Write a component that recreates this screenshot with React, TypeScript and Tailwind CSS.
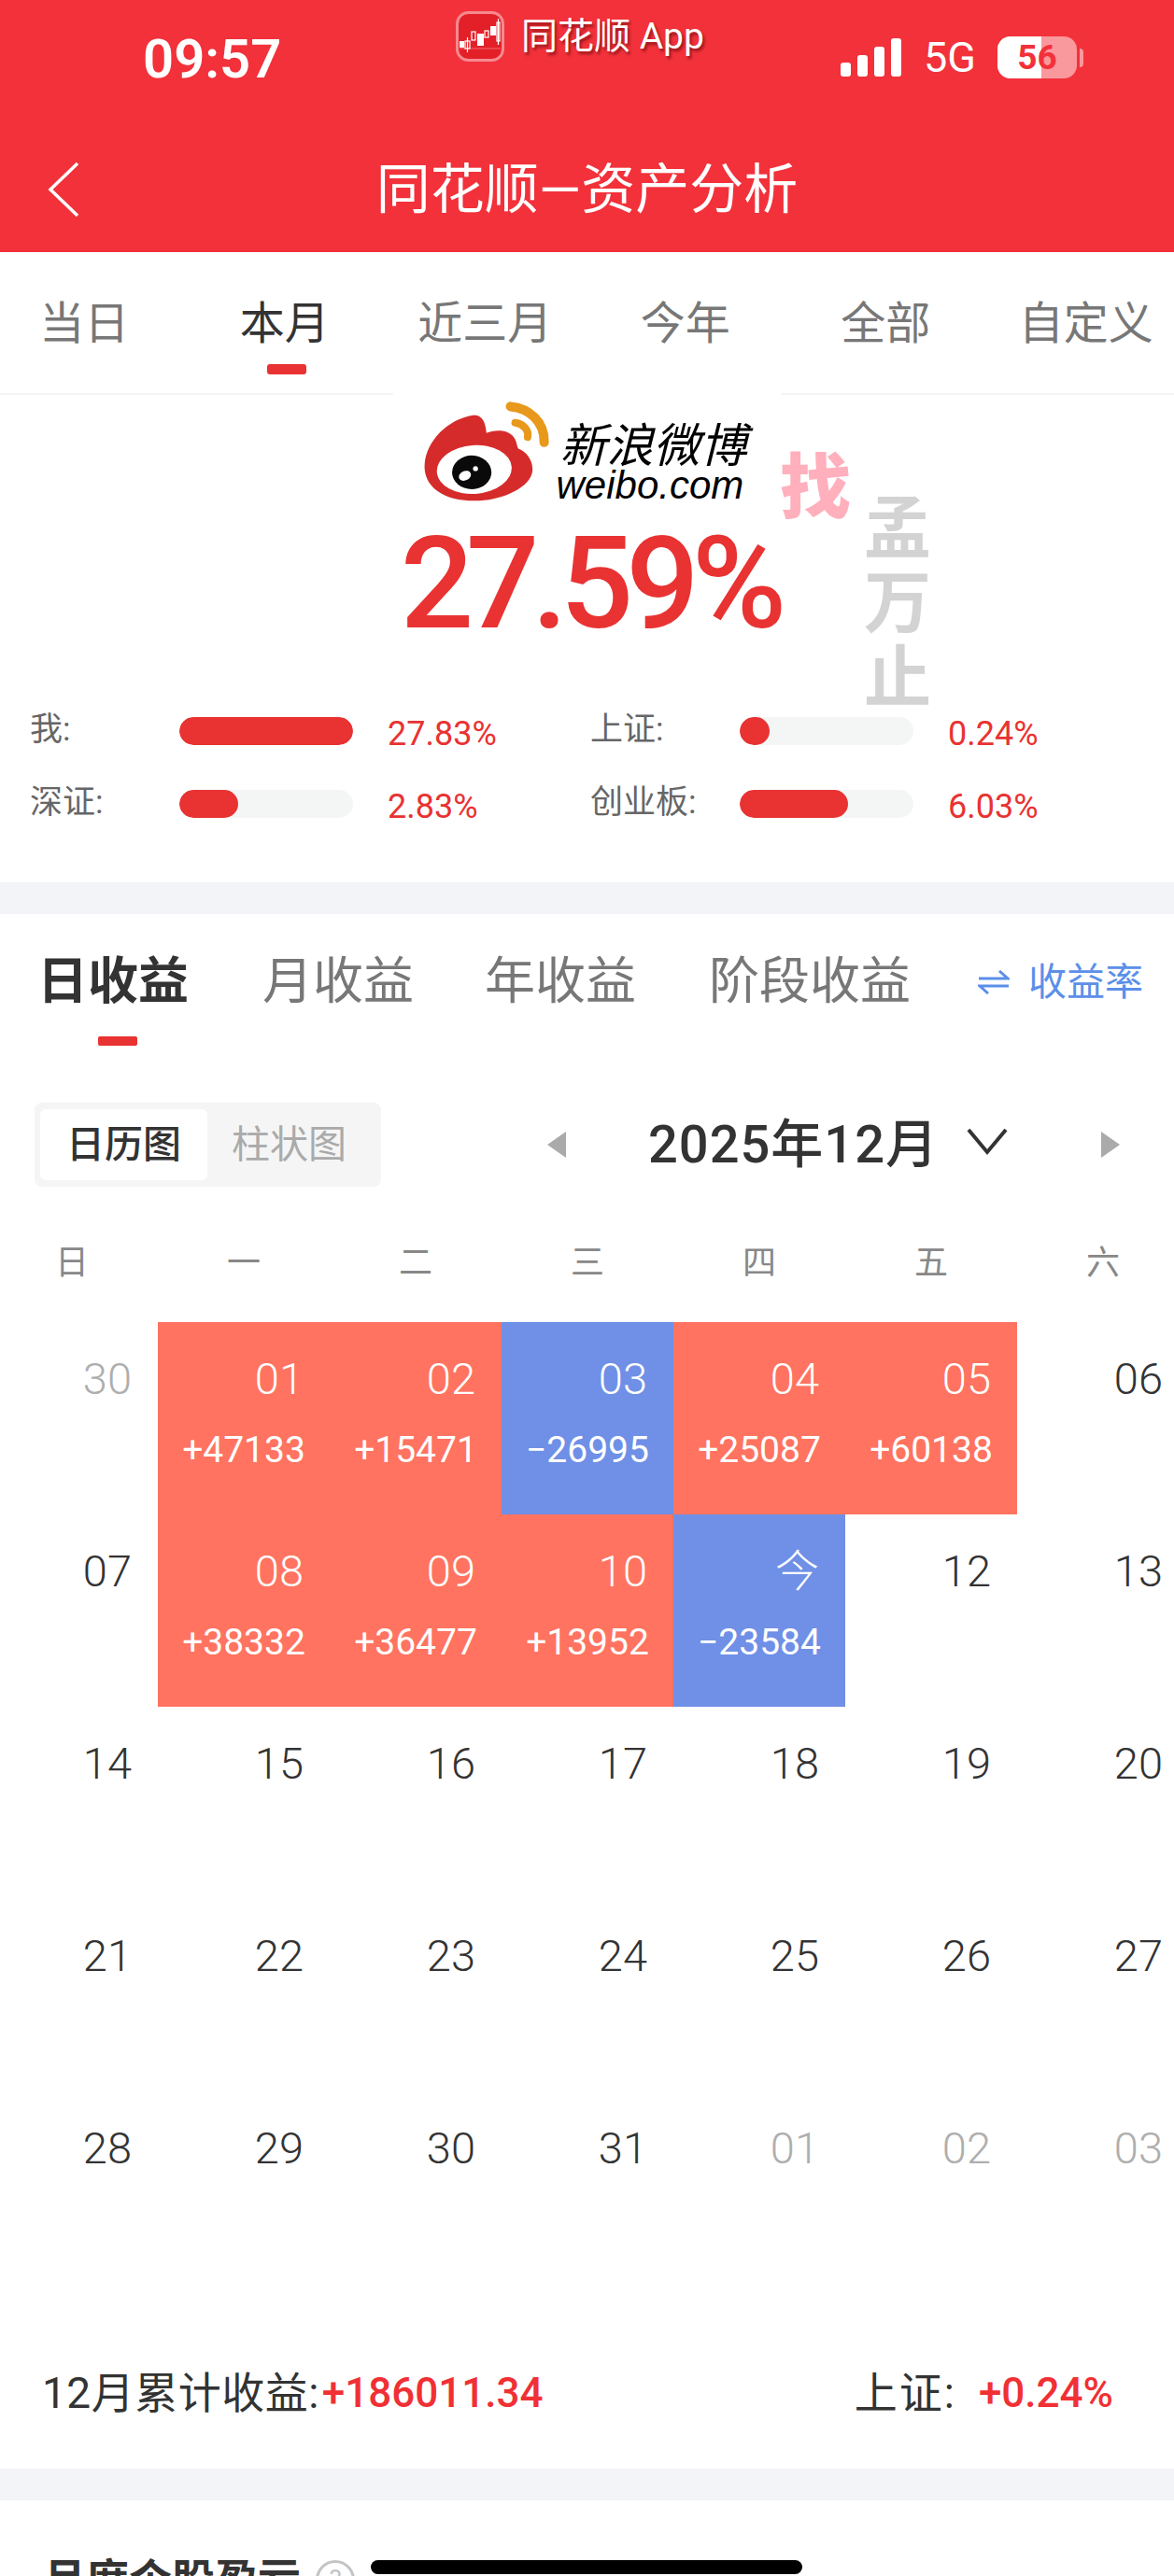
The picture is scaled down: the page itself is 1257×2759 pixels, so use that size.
import React from "react";

type Day = { d: string; sub?: string; tone?: "red" | "blue"; muted?: boolean };

const days: Day[] = [
  { d: "30", muted: true },
  { d: "01", sub: "+47133", tone: "red" },
  { d: "02", sub: "+15471", tone: "red" },
  { d: "03", sub: "−26995", tone: "blue" },
  { d: "04", sub: "+25087", tone: "red" },
  { d: "05", sub: "+60138", tone: "red" },
  { d: "06" },
  { d: "07" },
  { d: "08", sub: "+38332", tone: "red" },
  { d: "09", sub: "+36477", tone: "red" },
  { d: "10", sub: "+13952", tone: "red" },
  { d: "今", sub: "−23584", tone: "blue" },
  { d: "12" },
  { d: "13" },
  ...["14", "15", "16", "17", "18", "19", "20", "21", "22", "23", "24", "25", "26", "27", "28", "29", "30", "31"].map((d) => ({ d })),
  { d: "01", muted: true },
  { d: "02", muted: true },
  { d: "03", muted: true },
];

function Cell({ day }: { day: Day }) {
  const bg = day.tone === "red" ? "bg-[#ff7360] text-white" : day.tone === "blue" ? "bg-[#6f90e6] text-white" : day.muted ? "text-[#aeaeae]" : "text-[#333333]";
  return (
    <div className={`h-[206px] flex flex-col ${bg}`}>
      <div className="h-[122px] pr-[28px] text-right text-[47px] leading-[122px] font-light">{day.d}</div>
      {day.sub && <div className="text-center text-[39px] leading-[30px]">{day.sub}</div>}
    </div>
  );
}

function Stat({ label, pct, fill }: { label: string; pct: string; fill: number }) {
  return (
    <div className="flex items-center h-[30px]">
      <span className="w-[160px] -mt-[2px] text-[35px] leading-[40px] text-[#666666]">{label}</span>
      <div className="w-[186px] h-[30px] rounded-full bg-[#f4f6f5] overflow-hidden">
        <div className="h-full rounded-full bg-[#e93232]" style={{ width: fill }} />
      </div>
      <span className="ml-[37px] mt-[6px] text-[36px] leading-[40px] text-[#e93232]">{pct}</span>
    </div>
  );
}

function WeiboLogo() {
  return (
    <svg viewBox="100 55 410 335" className="w-[137px] h-[112px]">
      <path d="M105 265C110 190 180 120 260 108C290 105 300 130 303 165C330 155 375 150 395 185C400 195 400 205 405 215C435 225 455 260 450 290C440 345 340 385 260 382C170 382 100 340 105 265Z" fill="#d62b2b" />
      <ellipse cx="264" cy="282" rx="120" ry="78" transform="rotate(-4 264 282)" fill="#fff" />
      <ellipse cx="256" cy="291" rx="63" ry="54" fill="#0a0a0a" />
      <ellipse cx="234" cy="302" rx="20" ry="15" fill="#fff" transform="rotate(-25 234 302)" />
      <circle cx="268" cy="279" r="8" fill="#fff" />
      <path d="M380 80C440 85 490 130 488 195" stroke="#e8981a" strokeWidth="30" strokeLinecap="round" fill="none" />
      <path d="M395 132C420 135 440 155 435 178" stroke="#e8981a" strokeWidth="24" strokeLinecap="round" fill="none" />
    </svg>
  );
}

function AppIcon() {
  return (
    <svg viewBox="0 0 52 54" className="w-[52px] h-[54px] mr-[18px]">
      <rect x="1.5" y="1.5" width="49" height="51" rx="12" fill="#e32028" stroke="#f58a8f" strokeWidth="3" />
      <line x1="4" y1="40" x2="48" y2="40" stroke="#f4686d" strokeWidth="1" />
      <rect x="4" y="32" width="5" height="7" fill="#fff" />
      <rect x="10" y="32" width="5" height="8" fill="none" stroke="#fff" strokeWidth="1.2" />
      <line x1="12.5" y1="28" x2="12.5" y2="44" stroke="#fff" strokeWidth="1.2" />
      <rect x="17" y="22" width="4" height="9" fill="none" stroke="#fff" strokeWidth="1.2" />
      <rect x="23" y="24" width="7" height="13" fill="#fff" />
      <rect x="31" y="21" width="4" height="7" fill="none" stroke="#fff" strokeWidth="1.2" />
      <rect x="37" y="16" width="6" height="10" fill="#fff" />
      <rect x="44" y="12" width="3" height="20" fill="none" stroke="#fff" strokeWidth="1.2" />
      <line x1="45.5" y1="8" x2="45.5" y2="36" stroke="#fff" strokeWidth="1.2" />
    </svg>
  );
}

function StatusRight() {
  return (
    <div className="flex items-end ml-[132px] mt-[40px] h-[44px]">
      <div className="flex items-end gap-[7px] h-[41px] mb-[2px]">
        <span className="w-[11px] h-[15px] rounded-[3px] bg-white" />
        <span className="w-[11px] h-[23px] rounded-[3px] bg-white" />
        <span className="w-[11px] h-[32px] rounded-[3px] bg-white" />
        <span className="w-[11px] h-[41px] rounded-[3px] bg-white" />
      </div>
      <span className="ml-[24px] text-[45px] leading-[44px] text-white">5G</span>
      <div className="relative ml-[23px] w-[85px] h-[45px] rounded-[14px] bg-white/50 overflow-hidden">
        <div className="w-[47px] h-full bg-white" />
        <span className="absolute inset-0 flex items-center justify-center text-[37px] font-bold text-[#f2313a]">56</span>
      </div>
      <div className="ml-[3px] mb-[12px] w-[4px] h-[20px] rounded-r-full bg-white/50" />
    </div>
  );
}

export default function App() {
  return (
    <div className="relative w-[1257px] h-[2759px] overflow-hidden bg-white [font-family:Roboto,'Noto_Sans_CJK_SC',sans-serif]">
      <header className="h-[270px] bg-[#f2313a] text-white flex flex-col">
        <div className="h-[90px] flex items-start">
          <div className="w-[488px] pl-[153px] pt-[31px] text-[58px] leading-[64px] font-semibold">09:57</div>
          <div className="flex items-center w-[280px] mt-[12px]">
            <AppIcon />
            <span className="text-[39px] leading-[54px] [text-shadow:2px_3px_3px_rgba(80,0,0,0.55)] whitespace-nowrap">同花顺 App</span>
          </div>
          <StatusRight />
        </div>
        <div className="relative flex-1 flex items-center justify-center pt-[46px]">
          <svg viewBox="0 0 34 60" className="absolute left-[51px] top-[83px] w-[34px] h-[60px]" fill="none" stroke="#fff" strokeWidth="3.5">
            <path d="M32 2L3 30L32 58" />
          </svg>
          <h1 className="text-[58px] leading-[70px] whitespace-nowrap">同花顺—资产分析</h1>
        </div>
      </header>

      <div className="h-[153px] border-b-[2px] border-[#f4f4f4] -mx-[17px] flex w-[1290px]">
        {["当日", "本月", "近三月", "今年", "全部", "自定义"].map((t, i) => (
          <div key={t} className="relative w-[214.5px] text-center pt-[47px]">
            <span className={`text-[48px] leading-[60px] ${i === 1 ? "text-[#333333]" : "text-[#777777]"}`}>{t}</span>
            {i === 1 && <span className="absolute left-[88px] top-[120px] w-[42px] h-[11px] rounded-[3px] bg-[#e93232]" />}
          </div>
        ))}
      </div>

      <section className="relative h-[522px] flow-root">
        <div className="relative -mt-[2px] mx-auto w-[416px] h-[138px] bg-white flex pl-[32px] pt-[6px]">
          <WeiboLogo />
          <div className="ml-[10px] mt-[24px] italic text-black">
            <div className="text-[50px] leading-[54px] whitespace-nowrap">新浪微博</div>
            <div className="text-[42px] leading-[30px] -ml-[4px] [font-family:'Liberation_Sans',sans-serif]">weibo.com</div>
          </div>
        </div>
        <div className="text-center pl-[6px] text-[138px] leading-[130px] font-medium text-[#e93232] mt-[1px] tracking-[-8px]">27.59%</div>

        <span className="absolute left-[835px] top-[55px] text-[76px] leading-[90px] font-black text-[#ffb0bc]">找</span>
        <div className="absolute left-[925px] top-[104px] flex flex-col text-[72px] leading-[80px] font-bold text-[#d3d3d3]">
          <span>孟</span>
          <span>万</span>
          <span>止</span>
        </div>

        <div className="grid grid-cols-[600px_1fr] pl-[32px] mt-[78px] gap-y-[48px]">
          <Stat label="我:" pct="27.83%" fill={186} />
          <Stat label="上证:" pct="0.24%" fill={32} />
          <Stat label="深证:" pct="2.83%" fill={63} />
          <Stat label="创业板:" pct="6.03%" fill={116} />
        </div>
      </section>

      <div className="h-[34px] bg-[#f2f4f8]" />

      <section>
        <div className="relative h-[141px] flex items-start pt-[41px] text-[#777777] text-[54px] leading-[64px]">
          <span className="ml-[40px] font-bold text-[#333333]">日收益</span>
          <span className="ml-[79px]">月收益</span>
          <span className="ml-[76px]">年收益</span>
          <span className="ml-[78px]">阶段收益</span>
          <span className="ml-[72px] mt-[4px] flex items-center text-[41px] leading-[56px] text-[#5b8fe8]">
            <svg viewBox="0 0 34 26" className="w-[34px] h-[26px] mr-[20px]" fill="none" stroke="#5b8fe8" strokeWidth="3">
              <path d="M1 9H32L23 1" />
              <path d="M33 17H2L11 25" />
            </svg>
            收益率
          </span>
          <span className="absolute left-[105px] top-[131px] w-[42px] h-[10px] rounded-[2px] bg-[#e93232]" />
        </div>

        <div className="flex items-center mt-[61px] h-[90px]">
          <div className="ml-[37px] w-[371px] h-[90px] rounded-[8px] bg-[#f5f5f5] flex items-center pl-[6px]">
            <div className="w-[179px] h-[76px] rounded-[6px] bg-white text-center text-[41px] leading-[76px] font-medium text-[#333333]">日历图</div>
            <div className="w-[175px] text-center text-[41px] leading-[76px] text-[#aaaaaa]">柱状图</div>
          </div>
          <svg viewBox="0 0 22 30" className="ml-[177px] w-[22px] h-[30px]"><path d="M21 1V29L1 15Z" fill="#aaaaaa" /></svg>
          <span className="ml-[87px] text-[56px] leading-[64px] font-medium text-[#333333] whitespace-nowrap tracking-[1px]">2025年12月</span>
          <svg viewBox="0 0 44 30" className="ml-[30px] -mt-[6px] w-[44px] h-[30px]" fill="none" stroke="#333333" strokeWidth="4"><path d="M2 2L22 26L42 2" /></svg>
          <svg viewBox="0 0 22 30" className="ml-[99px] w-[22px] h-[30px]"><path d="M1 1V29L21 15Z" fill="#aaaaaa" /></svg>
        </div>

        <div className="-ml-[15px] w-[1288px] grid grid-cols-[repeat(7,184px)] mt-[62px] text-center text-[36px] leading-[40px] text-[#888888]">
          {["日", "一", "二", "三", "四", "五", "六"].map((w) => (
            <span key={w}>{w}</span>
          ))}
        </div>

        <div className="-ml-[15px] w-[1288px] grid grid-cols-[repeat(7,184px)] mt-[43px]">
          {days.map((day, i) => (
            <Cell key={i} day={day} />
          ))}
        </div>

        <div className="h-[198px] flex items-start pt-[90px] pl-[45px] pr-[65px] text-[46px] leading-[54px] text-[#333333] whitespace-nowrap">
          <span className="tracking-[0.5px]">12月累计收益:</span>
          <span className="ml-[3px] text-[44px] font-medium text-[#f03034]">+186011.34</span>
          <span className="ml-auto tracking-[2px]">上证:</span>
          <span className="ml-[24px] text-[44px] font-medium text-[#f03034]">+0.24%</span>
        </div>
      </section>

      <div className="h-[34px] bg-[#f2f4f8]" />

      <div className="flex items-start pl-[46px] pt-[55px] h-[100px]">
        <span className="text-[46px] leading-[60px] font-bold text-[#333333] whitespace-nowrap">月度个股盈亏</span>
        <span className="ml-[16px] mt-[9px] w-[42px] h-[42px] rounded-full border-[3px] border-[#c4c4c4] text-center text-[28px] leading-[36px] text-[#c4c4c4]">?</span>
        <span className="ml-[17px] mt-[9px] w-[462px] h-[15px] rounded-full bg-black" />
      </div>
    </div>
  );
}
